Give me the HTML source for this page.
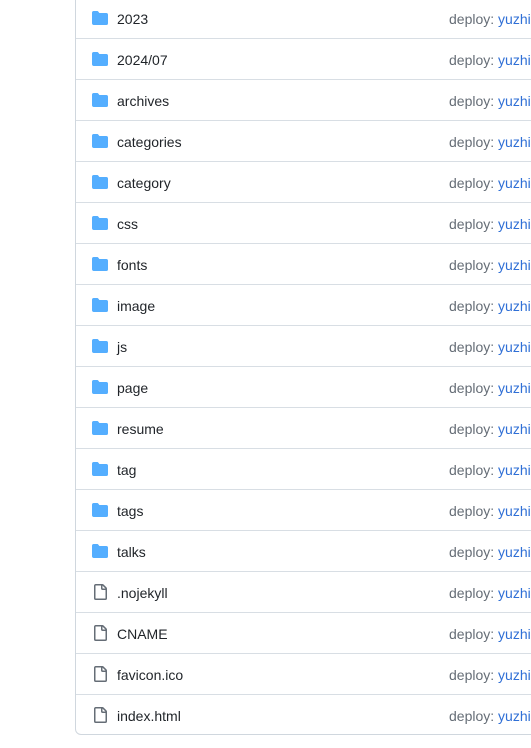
<!DOCTYPE html>
<html><head><style>
body{margin:0;background:#fff;font-family:"Liberation Sans",sans-serif;width:531px;height:748px;overflow:hidden;position:relative}
.box{position:absolute;left:75px;top:-6px;width:480px;height:741px;border:1px solid #d0d7de;border-radius:6px;box-sizing:border-box;overflow:hidden}
.row{position:absolute;left:0;width:100%;height:41px;border-bottom:1px solid #d8dee4;box-sizing:border-box}
.ic{position:absolute;left:16px;top:12px;width:16px;height:16px}
.n{position:absolute;left:41px;top:13px;font-size:14px;color:#1f2328}
.c{position:absolute;left:373px;top:13px;font-size:14px;color:#656d76;white-space:nowrap}
.c span{color:#2f6fd6}
</style></head><body><div class="box">
<script>
var f=["2023","2024/07","archives","categories","category","css","fonts","image","js","page","resume","tag","tags","talks"],fl=[".nojekyll","CNAME","favicon.ico","index.html"];
var folder='<svg class="ic" viewBox="0 0 16 16"><path fill="#54aeff" d="M1.75 1A1.75 1.75 0 0 0 0 2.75v10.5C0 14.216.784 15 1.75 15h12.5A1.75 1.75 0 0 0 16 13.25v-8.5A1.75 1.75 0 0 0 14.25 3H7.5a.25.25 0 0 1-.2-.1l-.9-1.2C6.07 1.26 5.550 1 5 1H1.75Z"/></svg>';
var file='<svg class="ic" viewBox="0 0 16 16"><path fill="#656d76" d="M2 1.75C2 .784 2.784 0 3.75 0h6.586c.464 0 .909.184 1.237.513l2.914 2.914c.329.328.513.773.513 1.237v9.586A1.75 1.75 0 0 1 13.250 16h-9.5A1.75 1.75 0 0 1 2 14.25Zm1.75-.25a.25.25 0 0 0-.25.25v12.5c0 .138.112.25.25.25h9.5a.25.25 0 0 0 .25-.25V6h-2.75A1.75 1.75 0 0 1 9 4.25V1.5Zm6.75.062V4.25c0 .138.112.25.25.25h2.688l-.011-.013-2.914-2.914-.013-.011Z"/></svg>';
var h='';
f.concat(fl).forEach(function(n,k){h+='<div class="row" style="top:'+(k*41+3)+'px">'+(k<f.length?folder:file)+'<div class="n">'+n+'</div><div class="c">deploy: <span>yuzhi</span></div></div>';});
document.write(h);
</script>
</div></body></html>
